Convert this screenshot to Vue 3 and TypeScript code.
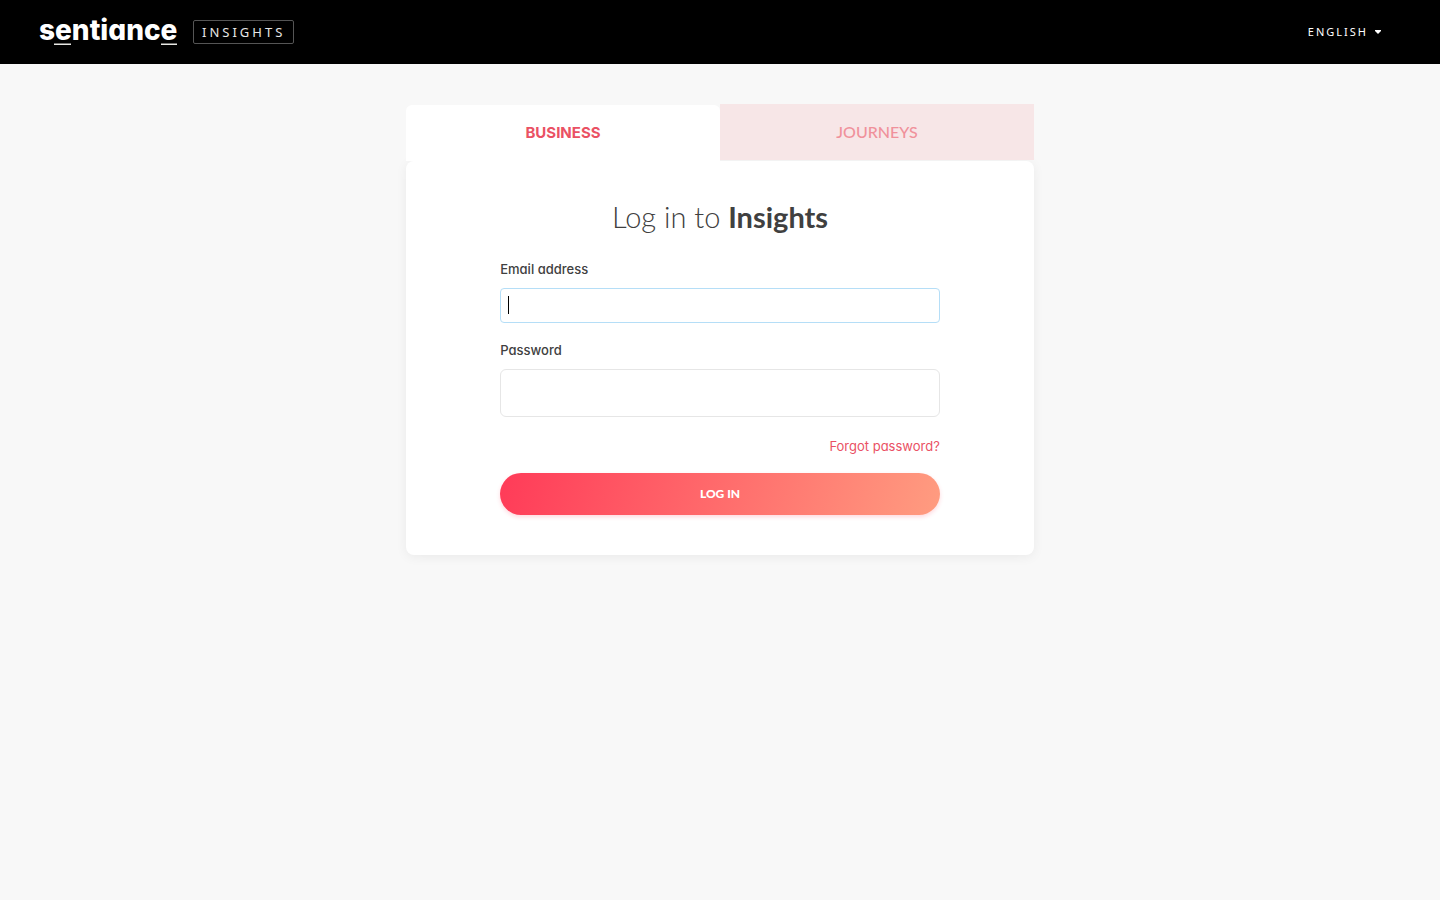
<script setup lang="ts">
import { onMounted, ref } from 'vue'

type TabId = 'business' | 'journeys'

const tabs: { id: TabId; label: string }[] = [
  { id: 'business', label: 'BUSINESS' },
  { id: 'journeys', label: 'JOURNEYS' },
]

const activeTab = ref<TabId>('business')
const language = ref('en')
const email = ref('')
const emailFocused = ref(false)
const password = ref('')
const emailInput = ref<HTMLInputElement | null>(null)

onMounted(() => {
  emailInput.value?.focus()
  emailFocused.value = true
})
</script>

<template>
  <div class="page">
    <header class="topbar">
      <div class="brand">
        <svg class="logo" width="138" height="32" viewBox="0 0 138 32" role="img" aria-label="sentiance">
          <text class="logo-text" x="-1" y="24">sentiance</text>
          <rect x="14" y="27.5" width="17" height="1.5" fill="#e8e8e4" />
          <rect x="121" y="27.5" width="16" height="1.5" fill="#e8e8e4" />
        </svg>
        <span class="product">INSIGHTS</span>
      </div>
      <div class="language">
        <select v-model="language" class="language-select" aria-label="Language">
          <option value="en">ENGLISH</option>
          <option value="fr">FRANÇAIS</option>
        </select>
        <svg class="language-caret" width="8" height="4" viewBox="0 0 8 4" aria-hidden="true">
          <path d="M1 0H7V1L4 4L1 1Z" fill="#fff" />
        </svg>
      </div>
    </header>

    <main class="login">
      <div class="tabs" role="tablist">
        <button
          v-for="tab in tabs"
          :key="tab.id"
          type="button"
          role="tab"
          class="tab"
          :class="{ active: tab.id === activeTab }"
          :aria-selected="tab.id === activeTab"
          @click="activeTab = tab.id"
        >
          {{ tab.label }}
        </button>
      </div>

      <form class="card" @submit.prevent>
        <h1 class="title">Log in to <strong>Insights</strong></h1>
        <label class="label" for="email">Email address</label>
        <div class="email-wrap">
          <input
            id="email"
            ref="emailInput"
            v-model="email"
            class="field email"
            :class="{ empty: !email }"
            type="text"
            autocomplete="off"
            @focus="emailFocused = true"
            @blur="emailFocused = false"
          />
          <span v-if="emailFocused && !email" class="cursor" aria-hidden="true"></span>
        </div>
        <label class="label" for="password">Password</label>
        <input id="password" v-model="password" class="field password" type="password" autocomplete="off" />
        <a class="forgot" href="#">Forgot password?</a>
        <button class="submit" type="submit">LOG IN</button>
      </form>
    </main>
  </div>
</template>

<style>
body {
  background: #f8f8f8;
}
</style>

<style scoped>
.page {
  min-height: 100vh;
  background: #f8f8f8;
  color: #404040;
  font-family: Inter, "Liberation Sans", sans-serif;
  font-feature-settings: "cv11";
}

.topbar {
  box-sizing: border-box;
  height: 64px;
  padding: 0 56px 0 40px;
  display: flex;
  align-items: center;
  justify-content: space-between;
  background: #000;
  color: #fff;
}

.brand {
  display: flex;
  align-items: center;
  gap: 15px;
}

.logo {
  display: block;
  overflow: visible;
}

.logo-text {
  fill: #fff;
  font-family: Inter, sans-serif;
  font-size: 28px;
  font-weight: 800;
}

.product {
  box-sizing: border-box;
  height: 24px;
  padding: 0 8px;
  border: 1px solid #555;
  border-radius: 2px;
  color: #e6e6e6;
  font-family: "Noto Sans", sans-serif;
  font-size: 13px;
  line-height: 22px;
  letter-spacing: 3px;
}

.language {
  display: grid;
  align-items: center;
}

.language-select {
  grid-area: 1 / 1;
  appearance: none;
  field-sizing: content;
  margin: 0;
  padding: 0 16px 0 0;
  border: 0;
  background: #000;
  color: #fff;
  font-family: "Noto Sans", sans-serif;
  font-size: 11px;
  line-height: 20px;
  letter-spacing: 2px;
}

.language-caret {
  grid-area: 1 / 1;
  justify-self: end;
  margin-right: 2px;
  pointer-events: none;
}

.login {
  box-sizing: border-box;
  width: 100%;
  max-width: 628px;
  margin: 0 auto;
  padding: 40px 0;
}

.tabs {
  display: grid;
  grid-template-columns: 1fr 1fr;
}

.tab {
  height: 56px;
  margin: 0 0 1px;
  padding: 0 0 2px;
  border: 0;
  background: #f7e6e7;
  color: #f0919b;
  font-family: Lato, sans-serif;
  font-size: 16px;
  font-weight: 500;
}

.tab.active {
  margin: 1px 0 0;
  border-radius: 6px 6px 0 0;
  background: #fff;
  color: #ea5164;
  font-family: Inter, sans-serif;
  font-size: 15px;
  font-weight: 700;
}

.card {
  display: flex;
  flex-direction: column;
  padding: 36px 15% 40px;
  border-radius: 8px;
  background: #fff;
  box-shadow: 0 2px 12px rgba(0, 0, 0, 0.06);
}

.title {
  margin: 0 0 24px;
  color: #404040;
  font-family: Lato, sans-serif;
  font-size: 29px;
  font-weight: 300;
  line-height: 40px;
  text-align: center;
}

.title strong {
  font-weight: 700;
}

.label {
  margin-bottom: 10px;
  font-size: 13px;
  font-weight: 500;
  line-height: 17px;
}

.field {
  box-sizing: border-box;
  display: block;
  width: 100%;
  margin: 0;
  padding: 0 7px;
  border: 1px solid #e6e6e6;
  border-radius: 6px;
  outline: 0;
  background: #fff;
  color: #222;
  font-family: inherit;
  font-size: 15px;
}

.email-wrap {
  position: relative;
  margin-bottom: 19px;
}

.email {
  height: 35px;
  border-color: #b5def7;
  border-radius: 4px;
}

.email.empty {
  caret-color: transparent;
}

.cursor {
  position: absolute;
  top: 8px;
  left: 8px;
  width: 1px;
  height: 18px;
  background: #000;
  pointer-events: none;
}

.password {
  height: 48px;
  margin-bottom: 19px;
}

.forgot {
  align-self: flex-end;
  margin-bottom: 17px;
  color: #ea5164;
  font-size: 13px;
  line-height: 20px;
  text-decoration: none;
}

.submit {
  height: 42px;
  padding: 0 0 2px;
  border: 0;
  border-radius: 21px;
  background: linear-gradient(105deg, #ff3b58, #ff9c80);
  box-shadow: 0 2px 4px rgba(255, 59, 88, 0.2);
  color: #fff;
  font-family: Lato, sans-serif;
  font-size: 12px;
  font-weight: 900;
}
</style>
